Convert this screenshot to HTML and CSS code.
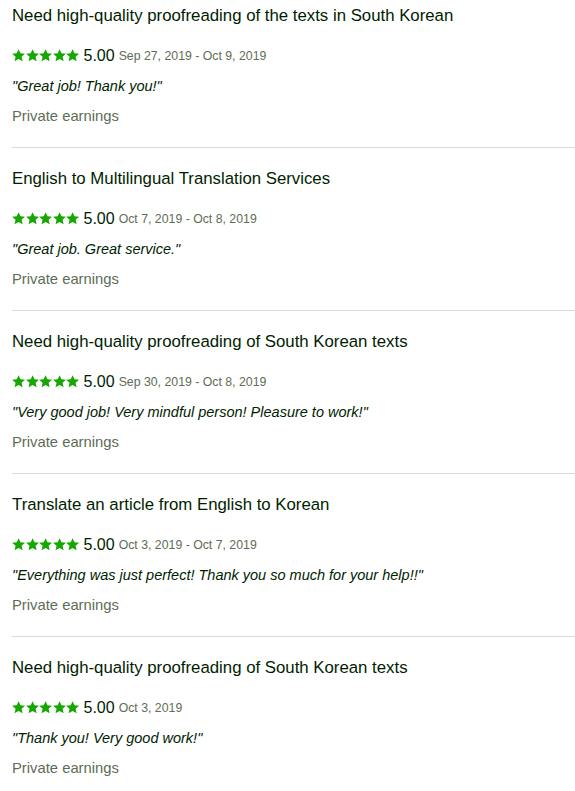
FILE: index.html
```html
<!DOCTYPE html>
<html lang="en">
<head>
<meta charset="utf-8">
<link rel="stylesheet" href="styles.css">
</head>
<body>
<div class="list">
  <div class="item">
    <h4 class="title">Need high-quality proofreading of the texts in South Korean</h4>
    <div class="rating">
      <span class="stars">
        <svg viewBox="0 0 14 14"><path d="M7 .2l2 4.4 4.9.4-3.7 3.2 1.1 4.9L7 10.6l-4.3 2.5 1.1-4.9L.1 5 5 4.6z"/></svg><svg viewBox="0 0 14 14"><path d="M7 .2l2 4.4 4.9.4-3.7 3.2 1.1 4.9L7 10.6l-4.3 2.5 1.1-4.9L.1 5 5 4.6z"/></svg><svg viewBox="0 0 14 14"><path d="M7 .2l2 4.4 4.9.4-3.7 3.2 1.1 4.9L7 10.6l-4.3 2.5 1.1-4.9L.1 5 5 4.6z"/></svg><svg viewBox="0 0 14 14"><path d="M7 .2l2 4.4 4.9.4-3.7 3.2 1.1 4.9L7 10.6l-4.3 2.5 1.1-4.9L.1 5 5 4.6z"/></svg><svg viewBox="0 0 14 14"><path d="M7 .2l2 4.4 4.9.4-3.7 3.2 1.1 4.9L7 10.6l-4.3 2.5 1.1-4.9L.1 5 5 4.6z"/></svg>
      </span>
      <span class="score">5.00</span>
      <span class="dates">Sep 27, 2019 - Oct 9, 2019</span>
    </div>
    <p class="quote">"Great job! Thank you!"</p>
    <p class="earnings">Private earnings</p>
  </div>
  <div class="item">
    <h4 class="title">English to Multilingual Translation Services</h4>
    <div class="rating">
      <span class="stars">
        <svg viewBox="0 0 14 14"><path d="M7 .2l2 4.4 4.9.4-3.7 3.2 1.1 4.9L7 10.6l-4.3 2.5 1.1-4.9L.1 5 5 4.6z"/></svg><svg viewBox="0 0 14 14"><path d="M7 .2l2 4.4 4.9.4-3.7 3.2 1.1 4.9L7 10.6l-4.3 2.5 1.1-4.9L.1 5 5 4.6z"/></svg><svg viewBox="0 0 14 14"><path d="M7 .2l2 4.4 4.9.4-3.7 3.2 1.1 4.9L7 10.6l-4.3 2.5 1.1-4.9L.1 5 5 4.6z"/></svg><svg viewBox="0 0 14 14"><path d="M7 .2l2 4.4 4.9.4-3.7 3.2 1.1 4.9L7 10.6l-4.3 2.5 1.1-4.9L.1 5 5 4.6z"/></svg><svg viewBox="0 0 14 14"><path d="M7 .2l2 4.4 4.9.4-3.7 3.2 1.1 4.9L7 10.6l-4.3 2.5 1.1-4.9L.1 5 5 4.6z"/></svg>
      </span>
      <span class="score">5.00</span>
      <span class="dates">Oct 7, 2019 - Oct 8, 2019</span>
    </div>
    <p class="quote">"Great job. Great service."</p>
    <p class="earnings">Private earnings</p>
  </div>
  <div class="item">
    <h4 class="title">Need high-quality proofreading of South Korean texts</h4>
    <div class="rating">
      <span class="stars">
        <svg viewBox="0 0 14 14"><path d="M7 .2l2 4.4 4.9.4-3.7 3.2 1.1 4.9L7 10.6l-4.3 2.5 1.1-4.9L.1 5 5 4.6z"/></svg><svg viewBox="0 0 14 14"><path d="M7 .2l2 4.4 4.9.4-3.7 3.2 1.1 4.9L7 10.6l-4.3 2.5 1.1-4.9L.1 5 5 4.6z"/></svg><svg viewBox="0 0 14 14"><path d="M7 .2l2 4.4 4.9.4-3.7 3.2 1.1 4.9L7 10.6l-4.3 2.5 1.1-4.9L.1 5 5 4.6z"/></svg><svg viewBox="0 0 14 14"><path d="M7 .2l2 4.4 4.9.4-3.7 3.2 1.1 4.9L7 10.6l-4.3 2.5 1.1-4.9L.1 5 5 4.6z"/></svg><svg viewBox="0 0 14 14"><path d="M7 .2l2 4.4 4.9.4-3.7 3.2 1.1 4.9L7 10.6l-4.3 2.5 1.1-4.9L.1 5 5 4.6z"/></svg>
      </span>
      <span class="score">5.00</span>
      <span class="dates">Sep 30, 2019 - Oct 8, 2019</span>
    </div>
    <p class="quote">"Very good job! Very mindful person! Pleasure to work!"</p>
    <p class="earnings">Private earnings</p>
  </div>
  <div class="item">
    <h4 class="title">Translate an article from English to Korean</h4>
    <div class="rating">
      <span class="stars">
        <svg viewBox="0 0 14 14"><path d="M7 .2l2 4.4 4.9.4-3.7 3.2 1.1 4.9L7 10.6l-4.3 2.5 1.1-4.9L.1 5 5 4.6z"/></svg><svg viewBox="0 0 14 14"><path d="M7 .2l2 4.4 4.9.4-3.7 3.2 1.1 4.9L7 10.6l-4.3 2.5 1.1-4.9L.1 5 5 4.6z"/></svg><svg viewBox="0 0 14 14"><path d="M7 .2l2 4.4 4.9.4-3.7 3.2 1.1 4.9L7 10.6l-4.3 2.5 1.1-4.9L.1 5 5 4.6z"/></svg><svg viewBox="0 0 14 14"><path d="M7 .2l2 4.4 4.9.4-3.7 3.2 1.1 4.9L7 10.6l-4.3 2.5 1.1-4.9L.1 5 5 4.6z"/></svg><svg viewBox="0 0 14 14"><path d="M7 .2l2 4.4 4.9.4-3.7 3.2 1.1 4.9L7 10.6l-4.3 2.5 1.1-4.9L.1 5 5 4.6z"/></svg>
      </span>
      <span class="score">5.00</span>
      <span class="dates">Oct 3, 2019 - Oct 7, 2019</span>
    </div>
    <p class="quote">"Everything was just perfect! Thank you so much for your help!!"</p>
    <p class="earnings">Private earnings</p>
  </div>
  <div class="item">
    <h4 class="title">Need high-quality proofreading of South Korean texts</h4>
    <div class="rating">
      <span class="stars">
        <svg viewBox="0 0 14 14"><path d="M7 .2l2 4.4 4.9.4-3.7 3.2 1.1 4.9L7 10.6l-4.3 2.5 1.1-4.9L.1 5 5 4.6z"/></svg><svg viewBox="0 0 14 14"><path d="M7 .2l2 4.4 4.9.4-3.7 3.2 1.1 4.9L7 10.6l-4.3 2.5 1.1-4.9L.1 5 5 4.6z"/></svg><svg viewBox="0 0 14 14"><path d="M7 .2l2 4.4 4.9.4-3.7 3.2 1.1 4.9L7 10.6l-4.3 2.5 1.1-4.9L.1 5 5 4.6z"/></svg><svg viewBox="0 0 14 14"><path d="M7 .2l2 4.4 4.9.4-3.7 3.2 1.1 4.9L7 10.6l-4.3 2.5 1.1-4.9L.1 5 5 4.6z"/></svg><svg viewBox="0 0 14 14"><path d="M7 .2l2 4.4 4.9.4-3.7 3.2 1.1 4.9L7 10.6l-4.3 2.5 1.1-4.9L.1 5 5 4.6z"/></svg>
      </span>
      <span class="score">5.00</span>
      <span class="dates">Oct 3, 2019</span>
    </div>
    <p class="quote">"Thank you! Very good work!"</p>
    <p class="earnings">Private earnings</p>
  </div>
</div>
</body>
</html>
```

FILE: styles.css
```css
html, body {
  margin: 0;
  padding: 0;
  background: #fff;
}
body {
  font-family: "Liberation Sans", Arial, sans-serif;
  color: #001e00;
  overflow: hidden;
}
.list {
  padding-left: 12px;
}
.item {
  padding: 20px 0 21px;
  border-bottom: 1px solid #d5e0d5;
}
.item:first-child {
  padding-top: 5px;
}
.title {
  margin: 0;
  font-size: 16.8px;
  line-height: 22px;
  font-weight: 400;
  color: #001e00;
}
.rating {
  margin-top: 18px;
  display: flex;
  align-items: center;
  height: 22px;
}
.stars {
  display: flex;
  gap: 0.4px;
  margin-right: 4px;
}
.stars svg {
  width: 13.2px;
  height: 13.2px;
  fill: #14a800;
  display: block;
}
.score {
  font-size: 16px;
  color: #001e00;
  margin-right: 4px;
}
.dates {
  font-size: 12.3px;
  color: #5e6d55;
}
.quote {
  margin: 9px 0 0;
  font-size: 14.5px;
  line-height: 20px;
  font-style: italic;
  color: #001e00;
}
.earnings {
  margin: 10px 0 0;
  font-size: 14.8px;
  line-height: 20px;
  color: #5e6d55;
}
```
